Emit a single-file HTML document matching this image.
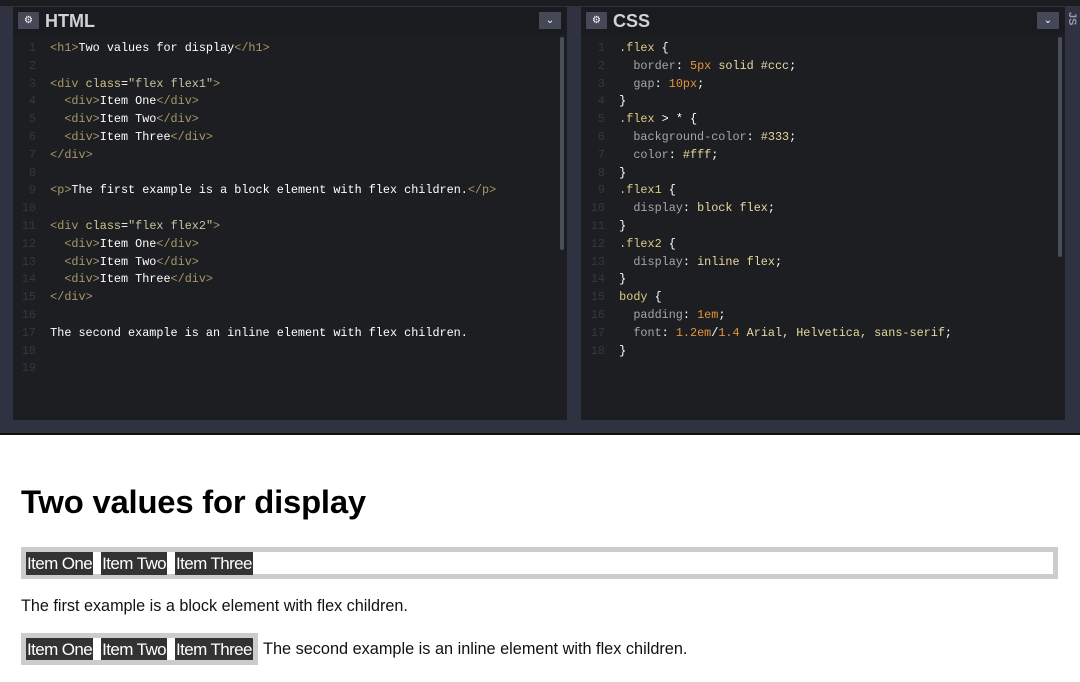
<!DOCTYPE html>
<html><head><style>
*{margin:0;padding:0;box-sizing:border-box}
body{width:1080px;height:682px;overflow:hidden;background:#fff;position:relative;font-family:"Liberation Sans",Arial,sans-serif}
.abs{position:absolute}
.code{font-family:"Liberation Mono",monospace;font-size:11.8px;line-height:17.8px;white-space:pre;color:#fff}
.ln{color:#34373f;text-align:right;width:22px;display:inline-block}
.t{color:#a8976a}.a{color:#d3c68a}.s{color:#c8c4a0}
.p{color:#a6a6a6}.v{color:#e6d9a0}.n{color:#e5923a}.sel{color:#ddcb84}
.item{background:#333;color:#fff;font-size:17px;line-height:23px;padding:0 1px;letter-spacing:-0.6px;white-space:nowrap;flex-shrink:0}
</style></head><body>
<div class="abs" style="left:0;top:0;width:1080px;height:435px;background:#2f3240"></div>
<div class="abs" style="left:0;top:0;width:1080px;height:6px;background:#1c1d21"></div>
<div class="abs" style="left:0;top:433px;width:1080px;height:2px;background:#111"></div>
<!-- HTML panel -->
<div class="abs" style="left:13px;top:7px;width:554px;height:413px;background:#1d1e22"></div>
<div class="abs" style="left:13px;top:7px;width:554px;height:28px;background:#1a1b1f"></div>
<div class="abs" style="left:18px;top:12px;width:21px;height:17px;background:#444857;color:#fff;font-size:10px;text-align:center;line-height:17px">⚙</div>
<div class="abs" style="left:45px;top:9px;color:#d0d1d6;font-size:18px;font-weight:bold;line-height:24px">HTML</div>
<div class="abs" style="left:539px;top:12px;width:22px;height:17px;background:#444857;color:#fff;font-size:10px;text-align:center;line-height:17px">⌄</div>
<div class="abs" style="left:560px;top:37px;width:4px;height:213px;background:#4a4d5a;border-radius:2px"></div>
<div class="abs code" style="left:14px;top:40px"><span class="ln">1</span>  <span class="t">&lt;h1&gt;</span>Two values for display<span class="t">&lt;/h1&gt;</span>
<span class="ln">2</span>
<span class="ln">3</span>  <span class="t">&lt;div</span> <span class="a">class</span>=<span class="s">"flex flex1"</span><span class="t">&gt;</span>
<span class="ln">4</span>    <span class="t">&lt;div&gt;</span>Item One<span class="t">&lt;/div&gt;</span>
<span class="ln">5</span>    <span class="t">&lt;div&gt;</span>Item Two<span class="t">&lt;/div&gt;</span>
<span class="ln">6</span>    <span class="t">&lt;div&gt;</span>Item Three<span class="t">&lt;/div&gt;</span>
<span class="ln">7</span>  <span class="t">&lt;/div&gt;</span>
<span class="ln">8</span>
<span class="ln">9</span>  <span class="t">&lt;p&gt;</span>The first example is a block element with flex children.<span class="t">&lt;/p&gt;</span>
<span class="ln">10</span>
<span class="ln">11</span>  <span class="t">&lt;div</span> <span class="a">class</span>=<span class="s">"flex flex2"</span><span class="t">&gt;</span>
<span class="ln">12</span>    <span class="t">&lt;div&gt;</span>Item One<span class="t">&lt;/div&gt;</span>
<span class="ln">13</span>    <span class="t">&lt;div&gt;</span>Item Two<span class="t">&lt;/div&gt;</span>
<span class="ln">14</span>    <span class="t">&lt;div&gt;</span>Item Three<span class="t">&lt;/div&gt;</span>
<span class="ln">15</span>  <span class="t">&lt;/div&gt;</span>
<span class="ln">16</span>
<span class="ln">17</span>  The second example is an inline element with flex children.
<span class="ln">18</span>
<span class="ln">19</span></div>
<!-- CSS panel -->
<div class="abs" style="left:581px;top:7px;width:484px;height:413px;background:#1d1e22"></div>
<div class="abs" style="left:581px;top:7px;width:484px;height:28px;background:#1a1b1f"></div>
<div class="abs" style="left:586px;top:12px;width:21px;height:17px;background:#444857;color:#fff;font-size:10px;text-align:center;line-height:17px">⚙</div>
<div class="abs" style="left:613px;top:9px;color:#d0d1d6;font-size:18px;font-weight:bold;line-height:24px">CSS</div>
<div class="abs" style="left:1037px;top:12px;width:22px;height:17px;background:#444857;color:#fff;font-size:10px;text-align:center;line-height:17px">⌄</div>
<div class="abs" style="left:1058px;top:37px;width:4px;height:220px;background:#4a4d5a;border-radius:2px"></div>
<div class="abs" style="top:12px;color:#9a9cab;font-size:11px;font-weight:bold;transform:rotate(90deg);transform-origin:left top;left:1078px">JS</div>
<div class="abs code" style="left:583px;top:40px"><span class="ln">1</span>  <span class="sel">.flex</span> {
<span class="ln">2</span>    <span class="p">border</span>: <span class="n">5px</span> <span class="v">solid #ccc</span>;
<span class="ln">3</span>    <span class="p">gap</span>: <span class="n">10px</span>;
<span class="ln">4</span>  }
<span class="ln">5</span>  <span class="sel">.flex</span> &gt; * {
<span class="ln">6</span>    <span class="p">background-color</span>: <span class="v">#333</span>;
<span class="ln">7</span>    <span class="p">color</span>: <span class="v">#fff</span>;
<span class="ln">8</span>  }
<span class="ln">9</span>  <span class="sel">.flex1</span> {
<span class="ln">10</span>    <span class="p">display</span>: <span class="v">block flex</span>;
<span class="ln">11</span>  }
<span class="ln">12</span>  <span class="sel">.flex2</span> {
<span class="ln">13</span>    <span class="p">display</span>: <span class="v">inline flex</span>;
<span class="ln">14</span>  }
<span class="ln">15</span>  <span class="sel">body</span> {
<span class="ln">16</span>    <span class="p">padding</span>: <span class="n">1em</span>;
<span class="ln">17</span>    <span class="p">font</span>: <span class="n">1.2em</span>/<span class="n">1.4</span> <span class="v">Arial, Helvetica, sans-serif</span>;
<span class="ln">18</span>  }</div>
<!-- preview -->
<div class="abs" style="left:21px;top:482px;font-size:32.8px;font-weight:bold;line-height:40px;color:#000;letter-spacing:-0.2px;white-space:nowrap">Two values for display</div>
<div class="abs" style="left:21px;top:547px;width:1037px;height:32px;border:5px solid #ccc;display:flex;gap:8px;align-items:flex-start">
<div class="item">Item One</div><div class="item">Item Two</div><div class="item">Item Three</div></div>
<div class="abs" style="left:21px;top:596px;font-size:16.2px;line-height:20px;color:#111;white-space:nowrap">The first example is a block element with flex children.</div>
<div class="abs" style="left:21px;top:633px;width:237px;height:32px;border:5px solid #ccc;display:flex;gap:8px">
<div class="item">Item One</div><div class="item">Item Two</div><div class="item">Item Three</div></div>
<div class="abs" style="left:263px;top:639px;font-size:16.3px;line-height:20px;color:#111;white-space:nowrap">The second example is an inline element with flex children.</div>
</body></html>
